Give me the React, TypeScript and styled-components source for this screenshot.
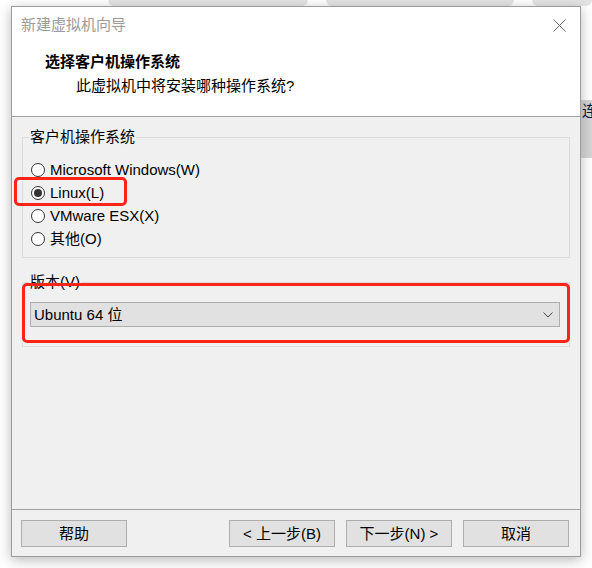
import React from "react";
import styled, { createGlobalStyle } from "styled-components";

const FONT = `"Liberation Sans", "Noto Sans CJK SC", sans-serif`;

const GlobalStyle = createGlobalStyle`
  html, body {
    margin: 0;
    padding: 0;
    background: #ffffff;
  }
  body {
    font-family: ${FONT};
    color: #000;
  }
`;

const Page = styled.div`
  width: 592px;
  height: 568px;
  overflow: hidden;
  background: #ffffff;
  display: flex;
  flex-direction: column;
`;

const TabStrip = styled.div`
  height: 6px;
  display: flex;
  gap: 18px;
  padding-left: 108px;
`;

const Tab = styled.div<{ $w: number }>`
  width: ${(p) => p.$w}px;
  height: 6px;
  background: #e4e4e4;
  border-radius: 0 0 6px 6px;
`;

const Stage = styled.div`
  display: flex;
  padding-left: 11px;
`;

const SideStrip = styled.div`
  flex: 1;
  min-width: 0;
  overflow: hidden;
  display: flex;
  flex-direction: column;
  padding-top: 94px;
`;

const SideBlock = styled.div`
  height: 58px;
  background: linear-gradient(90deg, #bdbdbd, #d4d4d4);
  font-family: "Noto Sans CJK SC", sans-serif;
  font-size: 15px;
  line-height: 20px;
  color: #0b1a3a;
  white-space: nowrap;
  padding-left: 1px;
`;

const Window = styled.div`
  flex-shrink: 0;
  width: 568px;
  height: 549px;
  border: 1px solid #9c9c9c;
  background: #f0f0f0;
  display: flex;
  flex-direction: column;
  box-shadow: 0 3px 12px rgba(0, 0, 0, 0.28);
`;

const TitleBar = styled.div`
  height: 36px;
  background: #fff;
  display: flex;
  align-items: center;
  justify-content: space-between;
  padding: 0 14px 0 9px;
`;

const TitleText = styled.span`
  font-size: 15px;
  color: #9b9b9b;
  line-height: 20px;
`;

const CloseIcon = () => (
  <svg width="13" height="13" viewBox="0 0 13 13">
    <path d="M0.5 0.5 L12.5 12.5 M12.5 0.5 L0.5 12.5" stroke="#6e6e6e" strokeWidth="1" fill="none" />
  </svg>
);

const Header = styled.div`
  background: #fff;
  padding: 9px 0 20px 33px;
  border-bottom: 1px solid #a0a0a0;
`;

const HeaderTitle = styled.div`
  font-size: 15px;
  font-weight: bold;
  line-height: 20px;
`;

const HeaderSub = styled.div`
  font-size: 15px;
  line-height: 20px;
  margin-top: 4px;
  padding-left: 31px;
`;

const Body = styled.div`
  flex: 1;
  padding: 10px 10px 0 10px;
  display: flex;
  flex-direction: column;
  gap: 14px;
`;

const Group = styled.fieldset<{ $pad: string }>`
  margin: 0;
  border: 1px solid #dcdcdc;
  padding: ${(p) => p.$pad};
  min-width: 0;
`;

const Legend = styled.legend<{ $shift: number }>`
  font-size: 15px;
  line-height: 20px;
  padding: 0 1px;
  margin-left: ${(p) => p.$shift}px;
`;

const RadioList = styled.div`
  display: flex;
  flex-direction: column;
  align-items: flex-start;
`;

const RadioRow = styled.label`
  position: relative;
  height: 23px;
  display: flex;
  align-items: center;
  gap: 5px;
  font-size: 15px;
  line-height: 20px;
`;

const RadioCircle = styled.span<{ $checked?: boolean }>`
  width: 14px;
  height: 14px;
  box-sizing: border-box;
  border: 1px solid #333;
  border-radius: 50%;
  background: #fff;
  display: flex;
  align-items: center;
  justify-content: center;

  &::after {
    content: "";
    width: 8px;
    height: 8px;
    border-radius: 50%;
    background: ${(p) => (p.$checked ? "#333" : "transparent")};
  }
`;

const Highlight = styled.span<{ $t: number; $l: number; $r: number; $b: number }>`
  position: absolute;
  top: ${(p) => p.$t}px;
  left: ${(p) => p.$l}px;
  right: ${(p) => p.$r}px;
  bottom: ${(p) => p.$b}px;
  box-sizing: border-box;
  border: 3px solid #ff2418;
  border-radius: 5px;
  pointer-events: none;
`;

const ComboWrap = styled.div`
  position: relative;
`;

const Combo = styled.div`
  height: 25px;
  box-sizing: border-box;
  border: 1px solid #adadad;
  background: #e1e1e1;
  display: flex;
  align-items: center;
  justify-content: space-between;
  padding: 1px 6px 0 3px;
  font-size: 15px;
  line-height: 20px;
`;

const Chevron = () => (
  <svg width="10" height="6" viewBox="0 0 10 6">
    <polyline points="0.5,0.5 5,5 9.5,0.5" stroke="#444" strokeWidth="1" fill="none" />
  </svg>
);

const Footer = styled.div`
  height: 47px;
  box-sizing: border-box;
  border-top: 1px solid #a0a0a0;
  padding: 10px 11px 0 9px;
  display: flex;
  gap: 11px;
`;

const Button = styled.button<{ $push?: boolean }>`
  width: 106px;
  height: 27px;
  box-sizing: border-box;
  border: 1px solid #adadad;
  background: #e1e1e1;
  font-family: ${FONT};
  font-size: 15px;
  line-height: 20px;
  color: #000;
  padding: 0;
  margin-left: ${(p) => (p.$push ? "auto" : "0")};
`;

const options = [
  { label: "Microsoft Windows(W)", checked: false },
  { label: "Linux(L)", checked: true },
  { label: "VMware ESX(X)", checked: false },
  { label: "其他(O)", checked: false },
];

export default function App() {
  return (
    <Page>
      <GlobalStyle />
      <TabStrip>
        <Tab $w={200} />
        <Tab $w={188} />
        <Tab $w={60} />
      </TabStrip>
      <Stage>
        <Window>
          <TitleBar>
            <TitleText>新建虚拟机向导</TitleText>
            <CloseIcon />
          </TitleBar>
          <Header>
            <HeaderTitle>选择客户机操作系统</HeaderTitle>
            <HeaderSub>此虚拟机中将安装哪种操作系统?</HeaderSub>
          </Header>
          <Body>
            <Group $pad="11px 0 7px 8px">
              <Legend $shift={-2}>客户机操作系统</Legend>
              <RadioList>
                {options.map((o) => (
                  <RadioRow key={o.label}>
                    <RadioCircle $checked={o.checked} />
                    {o.label}
                    {o.checked && <Highlight $t={-4} $l={-17} $r={-23} $b={-2} />}
                  </RadioRow>
                ))}
              </RadioList>
            </Group>
            <Group $pad="10px 9px 19px 7px">
              <Legend $shift={-1}>版本(V)</Legend>
              <ComboWrap>
                <Combo>
                  Ubuntu 64 位
                  <Chevron />
                </Combo>
                <Highlight $t={-19} $l={-8} $r={-10} $b={-16} />
              </ComboWrap>
            </Group>
          </Body>
          <Footer>
            <Button>帮助</Button>
            <Button $push>&lt; 上一步(B)</Button>
            <Button>下一步(N) &gt;</Button>
            <Button>取消</Button>
          </Footer>
        </Window>
        <SideStrip>
          <SideBlock>连</SideBlock>
        </SideStrip>
      </Stage>
    </Page>
  );
}
